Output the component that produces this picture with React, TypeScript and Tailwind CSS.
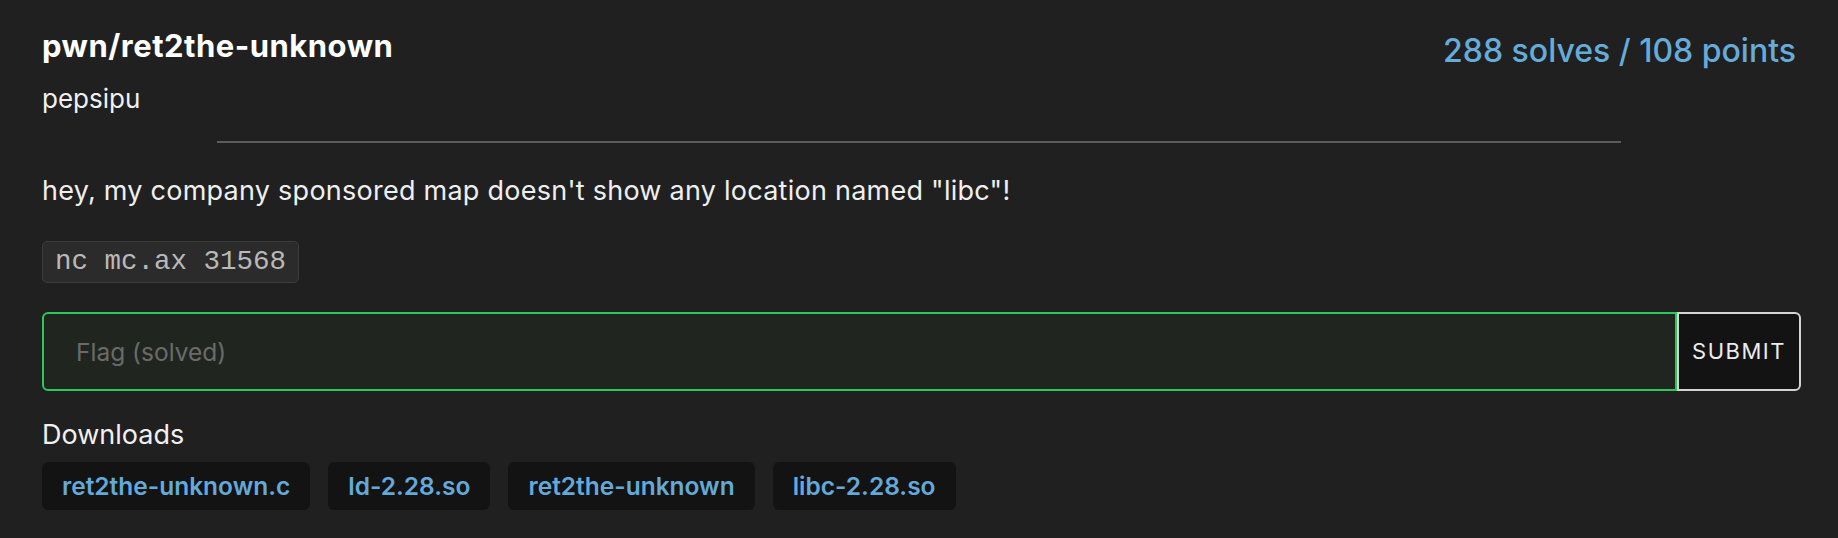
const FONT = "font-['Inter','Noto_Sans',sans-serif]";

const FILES = ["ret2the-unknown.c", "ld-2.28.so", "ret2the-unknown", "libc-2.28.so"];

export default function App() {
  return (
    <div className={`min-h-[538px] w-full bg-[#202020] ${FONT} text-[#f2f2f2]`}>
      <div className="px-[42px] pt-[27px] pb-[28px]">
        {/* header */}
        <div className="flex items-start justify-between">
          <div>
            <h1 className="text-[31px] leading-[38px] font-bold tracking-[0.5px] text-white">pwn/ret2the-unknown</h1>
            <div className="mt-[18px] text-[26px] leading-[31px] text-[#f0f0f0]">pepsipu</div>
          </div>
          <div className="mt-[4px] text-[32px] leading-[39px] font-medium text-[#65acdb]">
            288 solves / 108 points
          </div>
        </div>

        <hr className="mx-auto mt-[27px] h-[2px] w-4/5 border-0 bg-[#5c5c5c]" />

        <p className="mt-[31px] text-[27px] leading-[33px] tracking-[0.25px] text-[#efefef]">
          hey, my company sponsored map doesn't show any location named "libc"!
        </p>

        <div className="mt-[34px] inline-block rounded-[5px] border border-[#3c3c3c] bg-[#2b2b2b] px-[12px] font-['Liberation_Mono',monospace] text-[27.5px] leading-[40px] text-[#b9b9b9]">
          nc mc.ax 31568
        </div>

        {/* flag form */}
        <div className="mt-[29px] mr-[-5px] flex h-[79px]">
          <input
            disabled
            placeholder="Flag (solved)"
            className="h-full flex-1 rounded-l-[6px] border-2 border-[#2cc95a] bg-[#20261f] pl-[32px] text-[24.5px] text-[#eee] outline-none placeholder:text-[#6a6a6a]"
          />
          <button className="h-full w-[124px] rounded-r-[6px] border-2 border-[#d4d4d4] bg-[#131313] text-[22px] tracking-[1.5px] text-[#ececec]">
            SUBMIT
          </button>
        </div>

        <div className="mt-[27px] text-[27px] leading-[33px] text-[#f0f0f0]">Downloads</div>
        <div className="mt-[11px] flex gap-[18px]">
          {FILES.map((f) => (
            <a
              key={f}
              className="rounded-[6px] bg-[#131313] px-[20px] text-[24.5px] leading-[48px] font-semibold text-[#64a9d9]"
            >
              {f}
            </a>
          ))}
        </div>
      </div>
    </div>
  );
}
